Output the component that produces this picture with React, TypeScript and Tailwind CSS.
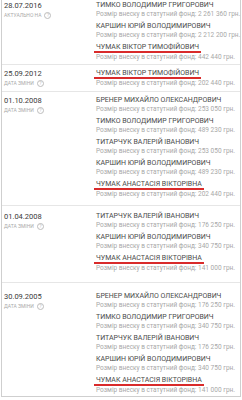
import React from "react";

type Holder = {
  name: string;
  amount: string;
  marked?: boolean;
};

type Change = {
  date: string;
  label: string;
  pad: string;
  holders: Holder[];
};

const TYMKO = "ТИМКО ВОЛОДИМИР ГРИГОРОВИЧ";
const KARSHYN = "КАРШИН ЮРІЙ ВОЛОДИМИРОВИЧ";
const BRENER = "БРЕНЕР МИХАЙЛО ОЛЕКСАНДРОВИЧ";
const TYTARCHUK = "ТИТАРЧУК ВАЛЕРІЙ ІВАНОВИЧ";
const CHUMAK_V = "ЧУМАК ВІКТОР ТИМОФІЙОВИЧ";
const CHUMAK_A = "ЧУМАК АНАСТАСІЯ ВІКТОРІВНА";

const changes: Change[] = [
  {
    date: "28.07.2016",
    label: "АКТУАЛЬНО НА",
    pad: "pt-[1px] pb-[2px]",
    holders: [
      { name: TYMKO, amount: "2 261 360" },
      { name: KARSHYN, amount: "2 212 200" },
      { name: CHUMAK_V, amount: "442 440", marked: true },
    ],
  },
  {
    date: "25.09.2012",
    label: "ДАТА ЗМІНИ",
    pad: "border-t pt-[4px] pb-[3px]",
    holders: [{ name: CHUMAK_V, amount: "202 440", marked: true }],
  },
  {
    date: "01.10.2008",
    label: "ДАТА ЗМІНИ",
    pad: "border-t pt-[4px] pb-[6px]",
    holders: [
      { name: BRENER, amount: "253 050" },
      { name: TYMKO, amount: "489 230" },
      { name: TYTARCHUK, amount: "253 050" },
      { name: KARSHYN, amount: "489 230" },
      { name: CHUMAK_A, amount: "202 440", marked: true },
    ],
  },
  {
    date: "01.04.2008",
    label: "ДАТА ЗМІНИ",
    pad: "border-t pt-[6px] pb-[9px]",
    holders: [
      { name: TYTARCHUK, amount: "176 250" },
      { name: KARSHYN, amount: "340 750" },
      { name: CHUMAK_A, amount: "141 000", marked: true },
    ],
  },
  {
    date: "30.09.2005",
    label: "ДАТА ЗМІНИ",
    pad: "border-t pt-[9px] pb-[1px]",
    holders: [
      { name: BRENER, amount: "176 250" },
      { name: TYMKO, amount: "340 750" },
      { name: TYTARCHUK, amount: "176 250" },
      { name: KARSHYN, amount: "340 750" },
      { name: CHUMAK_A, amount: "141 000", marked: true },
    ],
  },
];

const HelpIcon = () => (
  <span className="inline-flex h-[7px] w-[7px] items-center justify-center rounded-full border border-[#bdbdbd] text-[5px] leading-none text-[#bdbdbd]">
    ?
  </span>
);

const HolderItem = ({ holder }: { holder: Holder }) => (
  <div className="flex flex-col items-start whitespace-nowrap">
    {holder.marked ? (
      <span className="-ml-[2px] border-b-2 border-[#d92b2b] px-[2px] text-[7px] leading-[8px] text-[#4a4a4a]">
        {holder.name}
      </span>
    ) : (
      <span className="text-[7px] leading-[9px] text-[#4a4a4a]">
        {holder.name}
      </span>
    )}
    <span className="text-[6.5px] leading-[9px] text-[#a8a8a8]">
      Розмір внеску в статутний фонд: {holder.amount} грн.
    </span>
  </div>
);

export default function App() {
  return (
    <div
      className="h-[400px] w-[242px] overflow-hidden bg-white"
      style={{ fontFamily: "Roboto, 'Liberation Sans', sans-serif" }}
    >
      <div className="mx-[1px] flex flex-col border-x border-b border-[#cfcfcf]">
        {changes.map((change) => (
          <div
            key={change.date}
            className={`flex border-[#e6e6e6] ${change.pad}`}
          >
            <div className="w-[94px] shrink-0 pl-[2px]">
              <div className="text-[7.5px] leading-[10px] text-[#3a3a3a]">
                {change.date}
              </div>
              <div className="flex items-center gap-[3px] text-[5px] leading-[8px] text-[#aaa]">
                {change.label}
                <HelpIcon />
              </div>
            </div>
            <div className="flex flex-col gap-[3px]">
              {change.holders.map((h, j) => (
                <HolderItem key={j} holder={h} />
              ))}
            </div>
          </div>
        ))}
      </div>
    </div>
  );
}
